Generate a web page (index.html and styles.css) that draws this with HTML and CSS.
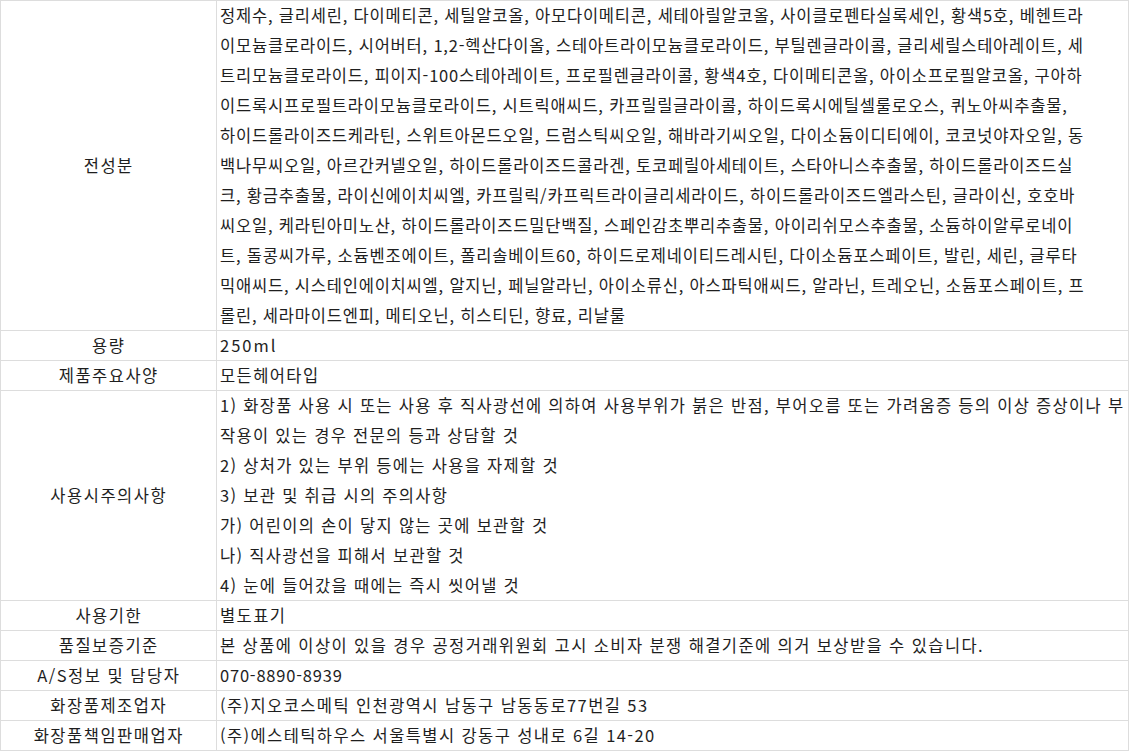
FILE: index.html
```html
<!DOCTYPE html>
<html lang="ko">
<head>
<meta charset="utf-8">
<title>상품정보</title>
<link rel="stylesheet" href="styles.css">
</head>
<body>
<div class="spec">
  <div class="label">전성분</div>
  <div class="value value-list">정제수, 글리세린, 다이메티콘, 세틸알코올, 아모다이메티콘, 세테아릴알코올, 사이클로펜타실록세인, 황색5호, 베헨트라<br>이모늄클로라이드, 시어버터, 1,2-헥산다이올, 스테아트라이모늄클로라이드, 부틸렌글라이콜, 글리세릴스테아레이트, 세<br>트리모늄클로라이드, 피이지-100스테아레이트, 프로필렌글라이콜, 황색4호, 다이메티콘올, 아이소프로필알코올, 구아하<br>이드록시프로필트라이모늄클로라이드, 시트릭애씨드, 카프릴릴글라이콜, 하이드록시에틸셀룰로오스, 퀴노아씨추출물,<br>하이드롤라이즈드케라틴, 스위트아몬드오일, 드럼스틱씨오일, 해바라기씨오일, 다이소듐이디티에이, 코코넛야자오일, 동<br>백나무씨오일, 아르간커넬오일, 하이드롤라이즈드콜라겐, 토코페릴아세테이트, 스타아니스추출물, 하이드롤라이즈드실<br>크, 황금추출물, 라이신에이치씨엘, 카프릴릭/카프릭트라이글리세라이드, 하이드롤라이즈드엘라스틴, 글라이신, 호호바<br>씨오일, 케라틴아미노산, 하이드롤라이즈드밀단백질, 스페인감초뿌리추출물, 아이리쉬모스추출물, 소듐하이알루로네이<br>트, 돌콩씨가루, 소듐벤조에이트, 폴리솔베이트60, 하이드로제네이티드레시틴, 다이소듐포스페이트, 발린, 세린, 글루타<br>믹애씨드, 시스테인에이치씨엘, 알지닌, 페닐알라닌, 아이소류신, 아스파틱애씨드, 알라닌, 트레오닌, 소듐포스페이트, 프<br>롤린, 세라마이드엔피, 메티오닌, 히스티딘, 향료, 리날룰</div>

  <div class="label">용량</div>
  <div class="value value-size">250ml</div>

  <div class="label">제품주요사양</div>
  <div class="value">모든헤어타입</div>

  <div class="label">사용시주의사항</div>
  <div class="value value-notes">
    <p class="line">1) 화장품 사용 시 또는 사용 후 직사광선에 의하여 사용부위가 붉은 반점, 부어오름 또는 가려움증 등의 이상 증상이나 부<br>작용이 있는 경우 전문의 등과 상담할 것</p>
    <p class="line">2) 상처가 있는 부위 등에는 사용을 자제할 것</p>
    <p class="line">3) 보관 및 취급 시의 주의사항</p>
    <p class="line">가) 어린이의 손이 닿지 않는 곳에 보관할 것</p>
    <p class="line">나) 직사광선을 피해서 보관할 것</p>
    <p class="line">4) 눈에 들어갔을 때에는 즉시 씻어낼 것</p>
  </div>

  <div class="label">사용기한</div>
  <div class="value">별도표기</div>

  <div class="label">품질보증기준</div>
  <div class="value">본 상품에 이상이 있을 경우 공정거래위원회 고시 소비자 분쟁 해결기준에 의거 보상받을 수 있습니다.</div>

  <div class="label">A/S정보 및 담당자</div>
  <div class="value value-num">070-8890-8939</div>

  <div class="label">화장품제조업자</div>
  <div class="value">(주)지오코스메틱 인천광역시 남동구 남동동로77번길 53</div>

  <div class="label">화장품책임판매업자</div>
  <div class="value">(주)에스테틱하우스 서울특별시 강동구 성내로 6길 14-20</div>
</div>
</body>
</html>
```

FILE: styles.css
```css
html, body {
  margin: 0;
  padding: 0;
  background: #ffffff;
}

body {
  font-family: "Noto Sans CJK KR", "Noto Sans", sans-serif;
  font-size: 16.5px;
  color: #1e1e1e;
}

.spec {
  display: grid;
  grid-template-columns: 216px 1fr;
  width: 1128px;
  border-right: 1px solid #dddddd;
  border-bottom: 1px solid #dddddd;
}

.label,
.value {
  line-height: 30px;
  box-shadow: inset 1px 1px 0 #dddddd;
}

.label {
  display: flex;
  align-items: center;
  justify-content: center;
  text-align: center;
  letter-spacing: 1.5px;
  text-indent: 1.5px;
}

.value {
  padding-left: 4px;
  padding-right: 0;
  white-space: nowrap;
  letter-spacing: 1.4px;
}

.value-list {
  letter-spacing: 0.8px;
}

.value-notes {
  letter-spacing: 1.3px;
}

.value-num {
  letter-spacing: 0.8px;
}

.value-size {
  letter-spacing: 2px;
}

.line {
  margin: 0;
}
```
